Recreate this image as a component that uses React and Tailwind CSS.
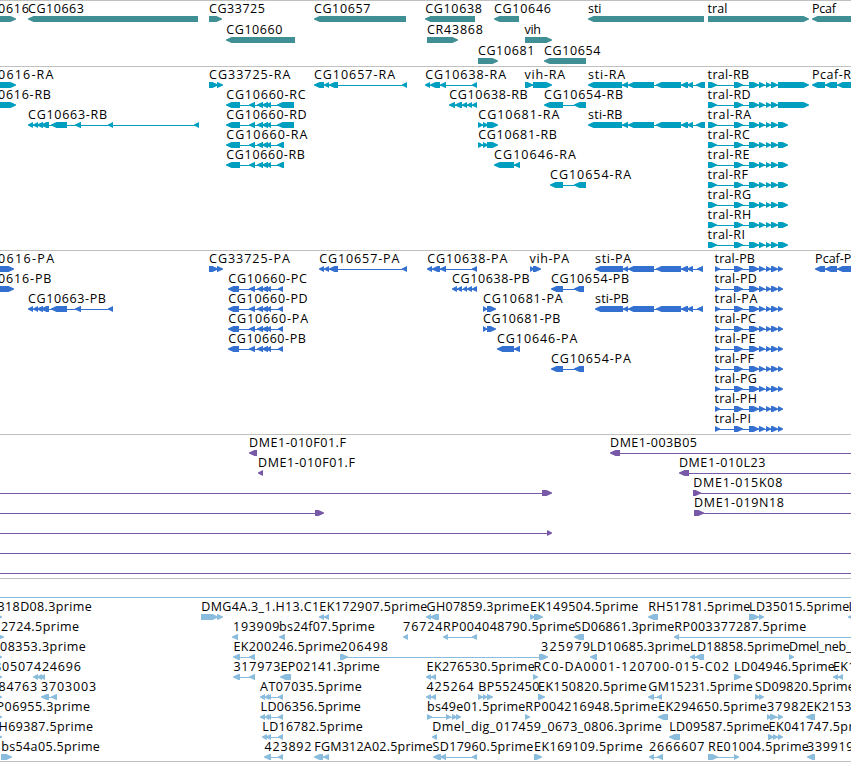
const WIDTH = 851;
const LEFT = -8;
const RIGHT = 860;

// exon layouts shared by several transcripts
const cg10660Long = [[226, 240], [249, 255], [257, 263], [262, 268], [266, 271], [277, 294]];
const cg10660Short = [[226, 240], [249, 255], [257, 263], [262, 268], [266, 271], [277, 284]];
const cg10660Cds = [[228, 239], [249, 255], [257, 263], [262, 268], [266, 271], [278, 283]];
const stiRna = [[588, 622], [622, 628], [628, 654], [656, 681], [681, 688], [687, 693], [696, 705]];
const stiCds = [[595, 623], [623, 628], [628, 654], [656, 681], [681, 688], [687, 693], [697, 703]];
const tralLong = [[708, 717], [734, 743], [749, 759], [759, 765], [766, 771], [771, 778], [778, 809]];
const tralShort = [[708, 717], [734, 743], [749, 759], [759, 765], [766, 771], [771, 778], [778, 788]];
const tralCds = [[715, 720], [734, 743], [749, 759], [759, 765], [766, 771], [771, 778], [778, 783]];

// [row, label, label start, label end, strand, exons, line]
const genes = [
  [0, '0616', -1.5, 28.5, 1, [[LEFT, 16]]],
  [0, 'CG10663', 28.5, 83.5, -1, [[28, 198]]],
  [0, 'CG33725', 209.5, 264.5, 1, [[209, 222]]],
  [0, 'CG10657', 314.3, 370, -1, [[314, 406]]],
  [0, 'CG10638', 425.7, 481.5, -1, [[425, 475]]],
  [0, 'CG10646', 494.3, 550.5, -1, [[494, 519]]],
  [0, 'sti', 588.5, 601, -1, [[588, 704]]],
  [0, 'tral', 708, 727, 1, [[708, 809]]],
  [0, 'Pcaf', 812.5, 835.5, -1, [[812, RIGHT]]],
  [1, 'CG10660', 226.7, 282, -1, [[226, 295]]],
  [1, 'CR43868', 427.3, 482.5, 1, [[427, 458]]],
  [1, 'vih', 525, 540.5, 1, [[525, 552]]],
  [2, 'CG10681', 478.3, 534, 1, [[478, 498]]],
  [2, 'CG10654', 544.5, 600, -1, [[544, 586]]],
];

const transcripts = [
  [0, '0616-RA', -1.5, 53, 1, [[LEFT, 16]]],
  [0, 'CG33725-RA', 209.5, 290, 1, [[209, 218], [217, 223]]],
  [0, 'CG10657-RA', 314.3, 394.7, -1, [[314, 324], [324, 329], [329, 338], [402, 407]]],
  [0, 'CG10638-RA', 425.7, 505.7, -1, [[425, 430], [430, 440], [440, 446], [472, 477]]],
  [0, 'vih-RA', 525, 564.7, 1, [[525, 533], [533, 552]]],
  [0, 'sti-RA', 588.5, 624.7, -1, stiRna],
  [0, 'tral-RB', 708, 748.7, 1, tralLong],
  [0, 'Pcaf-R', 812.5, 850.5, -1, [[812, 825], [825, 837], [837, RIGHT]]],
  [1, '0616-RB', -1.5, 50.5, 1, [[LEFT, 16]]],
  [1, 'CG10660-RC', 226.7, 305.3, -1, cg10660Long],
  [1, 'CG10638-RB', 449.7, 527.3, -1, [[449, 455], [455, 462], [462, 467], [467, 472], [472, 477]]],
  [1, 'CG10654-RB', 544.5, 622.7, -1, [[544, 563], [574, 586]]],
  [1, 'tral-RD', 708, 750.3, 1, tralLong],
  [2, 'CG10663-RB', 28.5, 106.7, -1, [[28, 33], [33, 38], [37, 43], [41, 49], [51, 67], [75, 81], [108, 113], [194, 199]]],
  [2, 'CG10660-RD', 226.7, 306.3, -1, cg10660Long],
  [2, 'CG10681-RA', 478.7, 559, 1, [[478, 483], [483, 488], [487, 498]]],
  [2, 'sti-RB', 588.5, 622, -1, stiRna],
  [2, 'tral-RA', 708, 750.7, 1, tralShort],
  [3, 'CG10660-RA', 226.7, 307, -1, cg10660Short],
  [3, 'CG10681-RB', 478.7, 556.5, 1, [[478, 483], [483, 488], [487, 498]]],
  [3, 'tral-RC', 708, 749.5, 1, tralShort],
  [4, 'CG10660-RB', 226.7, 304.5, -1, cg10660Short],
  [4, 'CG10646-RA', 494.5, 575.5, -1, [[494, 514], [514, 520]]],
  [4, 'tral-RE', 708, 749, 1, tralShort],
  [5, 'CG10654-RA', 550.5, 630.7, -1, [[550, 563], [574, 586]]],
  [5, 'tral-RF', 708, 747.5, 1, tralShort],
  [6, 'tral-RG', 708, 750.7, 1, tralShort],
  [7, 'tral-RH', 708, 750.7, 1, tralShort],
  [8, 'tral-RI', 708, 744.5, 1, tralShort],
];

const proteins = [
  [0, '0616-PA', -1.5, 53.7, 1, [[LEFT, 14]]],
  [0, 'CG33725-PA', 209.5, 289.5, 1, [[209, 218], [217, 223]]],
  [0, 'CG10657-PA', 319.7, 399, -1, [[319, 324], [324, 329], [329, 338], [402, 407]]],
  [0, 'CG10638-PA', 427.7, 507, -1, [[427, 432], [432, 440], [440, 446], [472, 477]]],
  [0, 'vih-PA', 530, 568.7, 1, [[530, 534], [533, 541]]],
  [0, 'sti-PA', 595.5, 630.7, -1, stiCds],
  [0, 'tral-PB', 715, 754.5, 1, tralCds],
  [0, 'Pcaf-P', 815.5, 851, -1, [[815, 825], [825, 837], [837, RIGHT]]],
  [1, '0616-PB', -1.5, 51, 1, [[LEFT, 14]]],
  [1, 'CG10660-PC', 228.7, 306.5, -1, cg10660Cds],
  [1, 'CG10638-PB', 452.5, 529.3, -1, [[452, 457], [457, 462], [463, 467], [467, 472], [472, 477]]],
  [1, 'CG10654-PB', 551.5, 628.7, -1, [[551, 563], [574, 584]]],
  [1, 'tral-PD', 715, 756.5, 1, tralCds],
  [2, 'CG10663-PB', 28.5, 105.5, -1, [[28, 33], [33, 38], [37, 43], [41, 49], [51, 67], [75, 81], [108, 113]]],
  [2, 'CG10660-PD', 228.7, 307.3, -1, cg10660Cds],
  [2, 'CG10681-PA', 483.5, 562.3, 1, [[483, 487], [487, 496]]],
  [2, 'sti-PB', 595.5, 628.5, -1, stiCds],
  [2, 'tral-PA', 715, 757, 1, tralCds],
  [3, 'CG10660-PA', 228.7, 307.7, -1, cg10660Cds],
  [3, 'CG10681-PB', 483.5, 560, 1, [[483, 487], [487, 496]]],
  [3, 'tral-PC', 715, 755.5, 1, tralCds],
  [4, 'CG10660-PB', 228.7, 305.5, -1, cg10660Cds],
  [4, 'CG10646-PA', 497.5, 577, -1, [[497, 514], [514, 520]]],
  [4, 'tral-PE', 715, 755, 1, tralCds],
  [5, 'CG10654-PA', 551.5, 630.5, -1, [[551, 563], [574, 584]]],
  [5, 'tral-PF', 715, 753.5, 1, tralCds],
  [6, 'tral-PG', 715, 756.5, 1, tralCds],
  [7, 'tral-PH', 715, 756.5, 1, tralCds],
  [8, 'tral-PI', 715, 750.5, 1, tralCds],
];

const bacs = [
  [0, 'DME1-010F01.F', 249.5, 345.5, -1, [[249, 257]]],
  [0, 'DME1-003B05', 610.5, 696.5, -1, [[610, 620]], [615, RIGHT]],
  [1, 'DME1-010F01.F', 258.5, 354.5, -1, [[258, 263]]],
  [1, 'DME1-010L23', 679.3, 765, -1, [[679, 689]], [684, RIGHT]],
  [2, '', 0, 0, 1, [[542, 552]], [LEFT, 547]],
  [2, 'DME1-015K08', 693.7, 782, 1, [[693, 701]], [694, RIGHT]],
  [3, '', 0, 0, 1, [[315, 324]], [LEFT, 320]],
  [3, 'DME1-019N18', 694.5, 783.5, 1, [[694, 704]], [695, RIGHT]],
  [4, '', 0, 0, 1, [[547, 552]], [LEFT, 549]],
  [5, '', 0, 0, 1, [], [LEFT, RIGHT]],
  [6, '', 0, 0, 1, [], [LEFT, RIGHT]],
];

const ests = [
  [0, '', 0, 0, 1, [], [LEFT, RIGHT]],
  [1, '318D08.3prime', -2, 91.3, 1, [[-4, 2]]],
  [1, 'DMG4A.3_1.H13.C1', 201.7, 318.7, 1, [[201, 218], [217, 223]]],
  [1, 'EK172907.5prime', 319.7, 427, -1, [[319, 324], [324, 329]]],
  [1, 'GH07859.3prime', 427, 529, -1, [[426, 431], [430, 439]]],
  [1, 'EK149504.5prime', 530.5, 638, 1, [[530, 535], [534, 543]]],
  [1, 'RH51781.5prime', 648.7, 750, -1, [[648, 658]]],
  [1, 'LD35015.5prime', 749.5, 849, 1, [[749, 759], [759, 764]]],
  [1, 'L', 849, 854, -1, [[848, 856]]],
  [2, '2724.5prime', 1.3, 78.7, 1, [[-2, 4]]],
  [2, '193909', 233.5, 279, -1, [[232, 238]]],
  [2, 'bs24f07.5prime', 279.5, 374.3, -1, [[279, 285]]],
  [2, '76724', 403.5, 442, -1, [[403, 408]]],
  [2, 'RP004048790.5prime', 443.5, 575, -1, [[443, 448], [472, 477]]],
  [2, 'SD06861.3prime', 574.7, 674, -1, [[574, 584]]],
  [2, 'RP003377287.5prime', 674.7, 806, -1, [[674, 679]], [678, RIGHT]],
  [3, '08353.3prime', 0.5, 85.5, 1, [[-3, 2]]],
  [3, 'EK200246.5prime', 233.8, 341, -1, [[233, 240], [249, 255]]],
  [3, '206498', 340.7, 387.5, 1, [[340, 348], [539, 548]]],
  [3, '325979', 541.5, 589.5, 1, []],
  [3, 'LD10685.3prime', 590.5, 690, -1, [[590, 597]]],
  [3, 'LD18858.5prime', 690.5, 789.5, -1, [[690, 695], [695, 704]]],
  [3, 'Dmel_neb_', 789.5, 851, 1, [[789, 794]]],
  [4, '80507424696', -5.5, 80.5, 1, [[-3, 2]]],
  [4, '', 0, 0, -1, [[33, 38], [37, 42], [40, 45]]],
  [4, '317973', 233.8, 280, -1, [[233, 240], [249, 255]]],
  [4, 'EP02141.3prime', 281, 379.5, -1, [[280, 291]]],
  [4, 'EK276530.5prime', 427, 534.3, -1, [[426, 431], [431, 436]]],
  [4, 'RC0-DA0001-120700-015-C02', 534, 728.5, 1, [[533, 538]]],
  [4, 'LD04946.5prime', 734.5, 834.5, 1, [[734, 741]]],
  [4, 'EK1', 833.5, 855, -1, [[833, 838], [838, 843]]],
  [5, '84763', -1, 36.7, 1, [[-3, 2]]],
  [5, '3703003', 41.5, 95.7, -1, [[41, 49], [51, 57]]],
  [5, 'AT07035.5prime', 260.5, 361.5, -1, [[260, 265], [265, 269], [267, 271], [278, 283]]],
  [5, '425264', 427, 473.3, -1, [[426, 431], [431, 436]]],
  [5, 'BP552450', 478.7, 539, 1, [[478, 483], [483, 487], [487, 493]]],
  [5, 'EK150820.5prime', 538.5, 646.5, 1, [[538, 545]]],
  [5, 'GM15231.5prime', 648.7, 752.3, -1, [[648, 654], [657, 662]]],
  [5, 'SD09820.5prime', 755.5, 854.5, 1, [[755, 760], [759, 764]]],
  [6, 'P06955.3prime', -3, 89.7, 1, [[-3, 2]]],
  [6, 'LD06356.5prime', 261, 360.5, -1, [[260, 265], [265, 269], [267, 271], [278, 283]]],
  [6, 'bs49e01.5prime', 427.5, 525, 1, [[427, 432], [446, 451], [452, 457], [456, 461]]],
  [6, 'RP004216948.5prime', 525.7, 657.5, 1, [[525, 530]]],
  [6, 'EK294650.5prime', 658.5, 766.5, -1, [[658, 668]]],
  [6, '37982', 767.5, 806, 1, [[767, 771], [770, 777], [778, 783]]],
  [6, 'EK2153', 807, 851, -1, [[806, 815]]],
  [7, 'H69387.5prime', -1, 92.7, 1, [[-3, 2]]],
  [7, 'LD16782.5prime', 262.7, 362.5, -1, [[262, 267], [266, 271], [278, 283]]],
  [7, 'Dmel_dig_017459_0673_0806.3prime', 432.7, 661.5, -1, [[432, 437]]],
  [7, 'LD09587.5prime', 669.7, 769, -1, [[669, 680]]],
  [7, 'EK041747.5prime', 769, 876, 1, [[768, 774], [773, 778], [778, 783]]],
  [8, 'bs54a05.5prime', 1.7, 99.5, 1, [[1, 12]]],
  [8, '423892', 265, 311, -1, [[264, 271], [278, 283]]],
  [8, 'FGM312A02.5prime', 314.7, 432.5, -1, [[314, 323], [323, 329]]],
  [8, 'SD17960.5prime', 433, 533, -1, [[433, 441], [440, 446], [472, 477]]],
  [8, 'EK169109.5prime', 534.5, 642.5, 1, [[534, 542]]],
  [8, '2666607', 649.5, 704, -1, [[649, 654], [657, 663]]],
  [8, 'RE01004.5prime', 708.5, 808.5, 1, [[708, 718], [734, 739]]],
  [8, '339919', 807.5, 853, -1, [[807, 815]]],
];

const arrowPath = (a, b, strand, top) => {
  const head = Math.min(5.5, b - a);
  const mid = top + 3;
  const bottom = top + 6;
  return strand > 0
    ? `M${a} ${top}H${b - head}L${b} ${mid - 0.5}V${mid + 0.5}L${b - head} ${bottom}H${a}Z`
    : `M${b} ${top}H${a + head}L${a} ${mid - 0.5}V${mid + 0.5}L${a + head} ${bottom}H${b}Z`;
};

const Feature = ({ feature, pitch }) => {
  const [row, label, start, end, strand, exons, line] = feature;
  const y = row * pitch;
  const span = line || (exons.length > 1 ? [exons[0][0] + 2, exons[exons.length - 1][1] - 2] : null);

  return (
    <g>
      {span && <rect x={span[0]} y={y + 18} width={span[1] - span[0]} height="1" />}
      {exons.map(([a, b]) => (
        <path key={a} d={arrowPath(a, b, strand, y + 15)} />
      ))}
      {label && (
        <text
          x={start - 0.4}
          y={y + 12}
          textLength={end - start + 0.8}
          className="fill-black"
        >
          {label}
        </text>
      )}
    </g>
  );
};

const Track = ({ features, className, pitch = 20 }) => (
  <section className={`border-t border-[#c0c0c0] overflow-hidden ${className}`}>
    <svg width={WIDTH} height="100%" className="block fill-current">
      {features.map((feature, i) => (
        <Feature key={i} feature={feature} pitch={pitch} />
      ))}
    </svg>
  </section>
);

export default function App() {
  return (
    <main className="flex flex-col w-[851px] h-[762px] bg-white overflow-hidden text-[12.5px] font-['Open_Sans','DejaVu_Sans',sans-serif]">
      <Track features={genes} pitch={21} className="h-[66px] text-[#408f94]" />
      <Track features={transcripts} className="h-[184px] text-[#009fc0]" />
      <Track features={proteins} className="h-[184px] text-[#3370cf]" />
      <Track features={bacs} className="h-[144px] text-[#7859a8]" />
      <Track features={ests} className="h-[184px] border-b text-[#8abddd]" />
    </main>
  );
}
